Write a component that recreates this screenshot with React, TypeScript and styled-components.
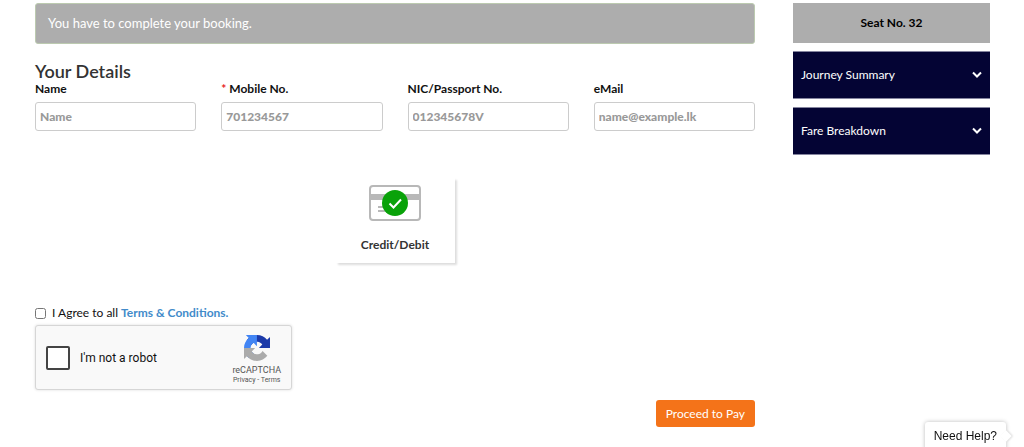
import React from "react";
import styled, { createGlobalStyle } from "styled-components";

const GlobalStyle = createGlobalStyle`
  *, *::before, *::after { box-sizing: border-box; }
  body {
    margin: 0;
    background: #fff;
    color: #111;
    font: 12px/16px Lato, "Open Sans", sans-serif;
  }
`;

const Page = styled.div`
  display: grid;
  grid-template-columns: 720fr 197fr;
  column-gap: 38px;
  align-items: start;
  padding: 3px 34px 20px 35px;
`;

const Alert = styled.div`
  padding: 10px 12px;
  border: 1px solid #bccab0;
  border-radius: 3px;
  background: #adadad;
  color: #fff;
  font-size: 13px;
  line-height: 19px;
`;

const Heading = styled.h1`
  margin: 17px 0 0;
  color: #333;
  font-size: 18px;
  font-weight: 600;
  line-height: 20px;
`;

const Fields = styled.div`
  display: grid;
  grid-template-columns: repeat(4, 1fr);
  column-gap: 25px;
`;

const Field = styled.div`
  display: flex;
  flex-direction: column;
  gap: 5px;
`;

const Label = styled.label`
  font-weight: 700;
`;

const Required = styled.span`
  color: #e8211d;
`;

const TextInput = styled.input`
  width: 100%;
  height: 29px;
  padding: 0 4px;
  border: 1px solid #ccc;
  border-radius: 3px;
  font: 900 12px/16px Lato, sans-serif;
  color: #333;
  &::placeholder { color: #999; opacity: 1; }
`;

const PaymentOptions = styled.div`
  display: flex;
  justify-content: center;
  margin: 47px 0 42px;
`;

const PaymentCard = styled.button`
  display: flex;
  flex-direction: column;
  align-items: center;
  gap: 16px;
  width: 119px;
  padding: 7px 0 10px;
  border: 0;
  background: #fff;
  box-shadow: 2px 2px 2px #ddd;
  color: #333;
  font: 700 12px/16px Lato, sans-serif;
`;

const Agree = styled.div`
  display: flex;
  align-items: center;
  gap: 6px;
  margin-bottom: 4px;
`;

const CheckBox = styled.input`
  width: 11px;
  height: 11px;
  margin: 0;
`;

const TermsLink = styled.a`
  color: #428bca;
  font-weight: 700;
  text-decoration: none;
`;

const Captcha = styled.div`
  display: flex;
  align-items: center;
  justify-content: space-between;
  width: 257px;
  height: 65px;
  padding: 0 10px;
  border: 1px solid #d6d6d6;
  border-radius: 3px;
  background: #f9f9f9;
  box-shadow: 0 0 3px #ddd;
  font-family: Roboto, sans-serif;
`;

const RobotCheck = styled.label`
  display: flex;
  align-items: center;
  gap: 10px;
`;

const RobotBox = styled.input`
  appearance: none;
  width: 24px;
  height: 24px;
  margin: 0;
  border: 2px solid #444;
  border-radius: 2px;
  background: #fff;
`;

const CaptchaBrand = styled.div`
  display: flex;
  flex-direction: column;
  align-items: center;
  padding-top: 5px;
  color: #555;
  font-size: 9px;
  line-height: 12px;
`;

const BrandName = styled.span`
  margin-top: 3px;
`;

const BrandLinks = styled.span`
  font-size: 7px;
  line-height: 9px;
  a { color: inherit; text-decoration: none; }
`;

const Actions = styled.div`
  display: flex;
  justify-content: flex-end;
  margin-top: 10px;
`;

const PayButton = styled.button`
  padding: 5px 10px;
  border: 0;
  border-radius: 3px;
  background: #f47319;
  color: #fff;
  font: 400 12px/17px Lato, sans-serif;
`;

const Aside = styled.aside`
  display: flex;
  flex-direction: column;
  gap: 8px;
`;

const Seat = styled.div`
  padding: 12px;
  background: #adadad;
  color: #000;
  font-weight: 700;
  text-align: center;
`;

const Panel = styled.button`
  display: flex;
  align-items: center;
  justify-content: space-between;
  height: 48px;
  padding: 0 8px;
  border: 1px solid #85859f;
  border-width: 1px 0;
  background: #040434;
  color: #fff;
  font: 400 12px/16px Lato, sans-serif;
`;

const Help = styled.button`
  position: fixed;
  right: 18px;
  bottom: -4px;
  padding: 6px 9px;
  border: 0;
  border-radius: 3px;
  background: #fff;
  box-shadow: 0 0 4px #bbb;
  color: #111;
  font: 12px/17px "Liberation Sans", Arial, sans-serif;
  &::after {
    content: "";
    position: absolute;
    right: -4px;
    top: 10px;
    width: 8px;
    height: 8px;
    background: #fff;
    box-shadow: 1px -1px 2px #ddd;
    transform: rotate(45deg);
  }
`;

const fields = [
  { id: "name", label: "Name", hint: "Name", type: "text" },
  { id: "mobile", label: "Mobile No.", hint: "701234567", type: "tel", required: true },
  { id: "nic", label: "NIC/Passport No.", hint: "012345678V", type: "text" },
  { id: "email", label: "eMail", hint: "name@example.lk", type: "email" },
];

const CardIcon = () => (
  <svg width="52" height="36" viewBox="0 0 52 36" aria-hidden="true">
    <rect x="1" y="1" width="50" height="34" rx="3" fill="#fff" stroke="#b8b8b8" strokeWidth="2" />
    <path d="M1 9h50v6H1z" fill="#b8b8b8" />
    <path d="M9 22h9M9 26h12" stroke="#b8b8b8" strokeWidth="2" />
    <circle cx="26" cy="18" r="13" fill="#09a209" />
    <path d="M20.500 18.500l4 4 7.500-8" fill="none" stroke="#fff" strokeWidth="2" />
  </svg>
);

const RecaptchaLogo = () => (
  <svg width="26" height="26" viewBox="0 0 64 64" aria-hidden="true">
    <path fill="#1c3aa9" d="M64 31.955l-.033-1.370V4.687l-7.160 7.160C50.948 4.674 42.033.093 32.050.093c-10.400 0-19.622 4.960-25.458 12.640l11.736 11.860a15.550 15.550 0 0 1 4.754-5.334c2.050-1.600 4.952-2.906 8.968-2.906.485 0 .860.057 1.135.163 4.976.393 9.288 3.140 11.828 7.124l-8.307 8.307L64 31.953" />
    <path fill="#4285f4" d="M31.862.094l-1.370.033H4.594l7.160 7.160C4.580 13.147 0 22.060 0 32.046c0 10.400 4.960 19.622 12.640 25.458L24.500 45.768a15.550 15.550 0 0 1-5.334-4.754c-1.600-2.050-2.906-4.952-2.906-8.968 0-.485.057-.860.163-1.135.393-4.976 3.140-9.288 7.124-11.828l8.307 8.307L31.860.095" />
    <path fill="#ababab" d="M.001 32.045l.033 1.370v25.898l7.160-7.160c5.860 7.173 14.774 11.754 24.760 11.754 10.400 0 19.622-4.960 25.458-12.640l-11.736-11.860a15.550 15.550 0 0 1-4.754 5.334c-2.050 1.600-4.952 2.906-8.968 2.906-.485 0-.860-.057-1.135-.163-4.976-.393-9.288-3.140-11.828-7.124l8.307-8.307c-10.522.040-22.400.066-27.295-.005" />
  </svg>
);

const Chevron = () => (
  <svg width="10" height="8" viewBox="0 0 10 8" aria-hidden="true">
    <path d="M1 1.500l4 4 4-4" fill="none" stroke="#fff" strokeWidth="2" />
  </svg>
);

export default function App() {
  return (
    <>
      <GlobalStyle />
      <Page>
        <main>
          <Alert>You have to complete your booking.</Alert>
          <Heading>Your Details</Heading>
          <Fields>
            {fields.map((f) => (
              <Field key={f.id}>
                <Label htmlFor={f.id}>
                  {f.required && <Required>* </Required>}
                  {f.label}
                </Label>
                <TextInput id={f.id} type={f.type} placeholder={f.hint} required={f.required} />
              </Field>
            ))}
          </Fields>
          <PaymentOptions>
            <PaymentCard type="button" aria-pressed="true">
              <CardIcon />
              Credit/Debit
            </PaymentCard>
          </PaymentOptions>
          <Agree>
            <CheckBox id="agree" type="checkbox" />
            <span>
              <label htmlFor="agree">I Agree to all </label>
              <TermsLink href="#terms">Terms &amp; Conditions.</TermsLink>
            </span>
          </Agree>
          <Captcha>
            <RobotCheck>
              <RobotBox type="checkbox" />
              I'm not a robot
            </RobotCheck>
            <CaptchaBrand>
              <RecaptchaLogo />
              <BrandName>reCAPTCHA</BrandName>
              <BrandLinks>
                <a href="#privacy">Privacy</a> - <a href="#recaptcha-terms">Terms</a>
              </BrandLinks>
            </CaptchaBrand>
          </Captcha>
          <Actions>
            <PayButton type="button">Proceed to Pay</PayButton>
          </Actions>
        </main>
        <Aside>
          <Seat>Seat No. 32</Seat>
          <Panel type="button" aria-expanded="false">
            Journey Summary
            <Chevron />
          </Panel>
          <Panel type="button" aria-expanded="false">
            Fare Breakdown
            <Chevron />
          </Panel>
        </Aside>
      </Page>
      <Help type="button">Need Help?</Help>
    </>
  );
}
